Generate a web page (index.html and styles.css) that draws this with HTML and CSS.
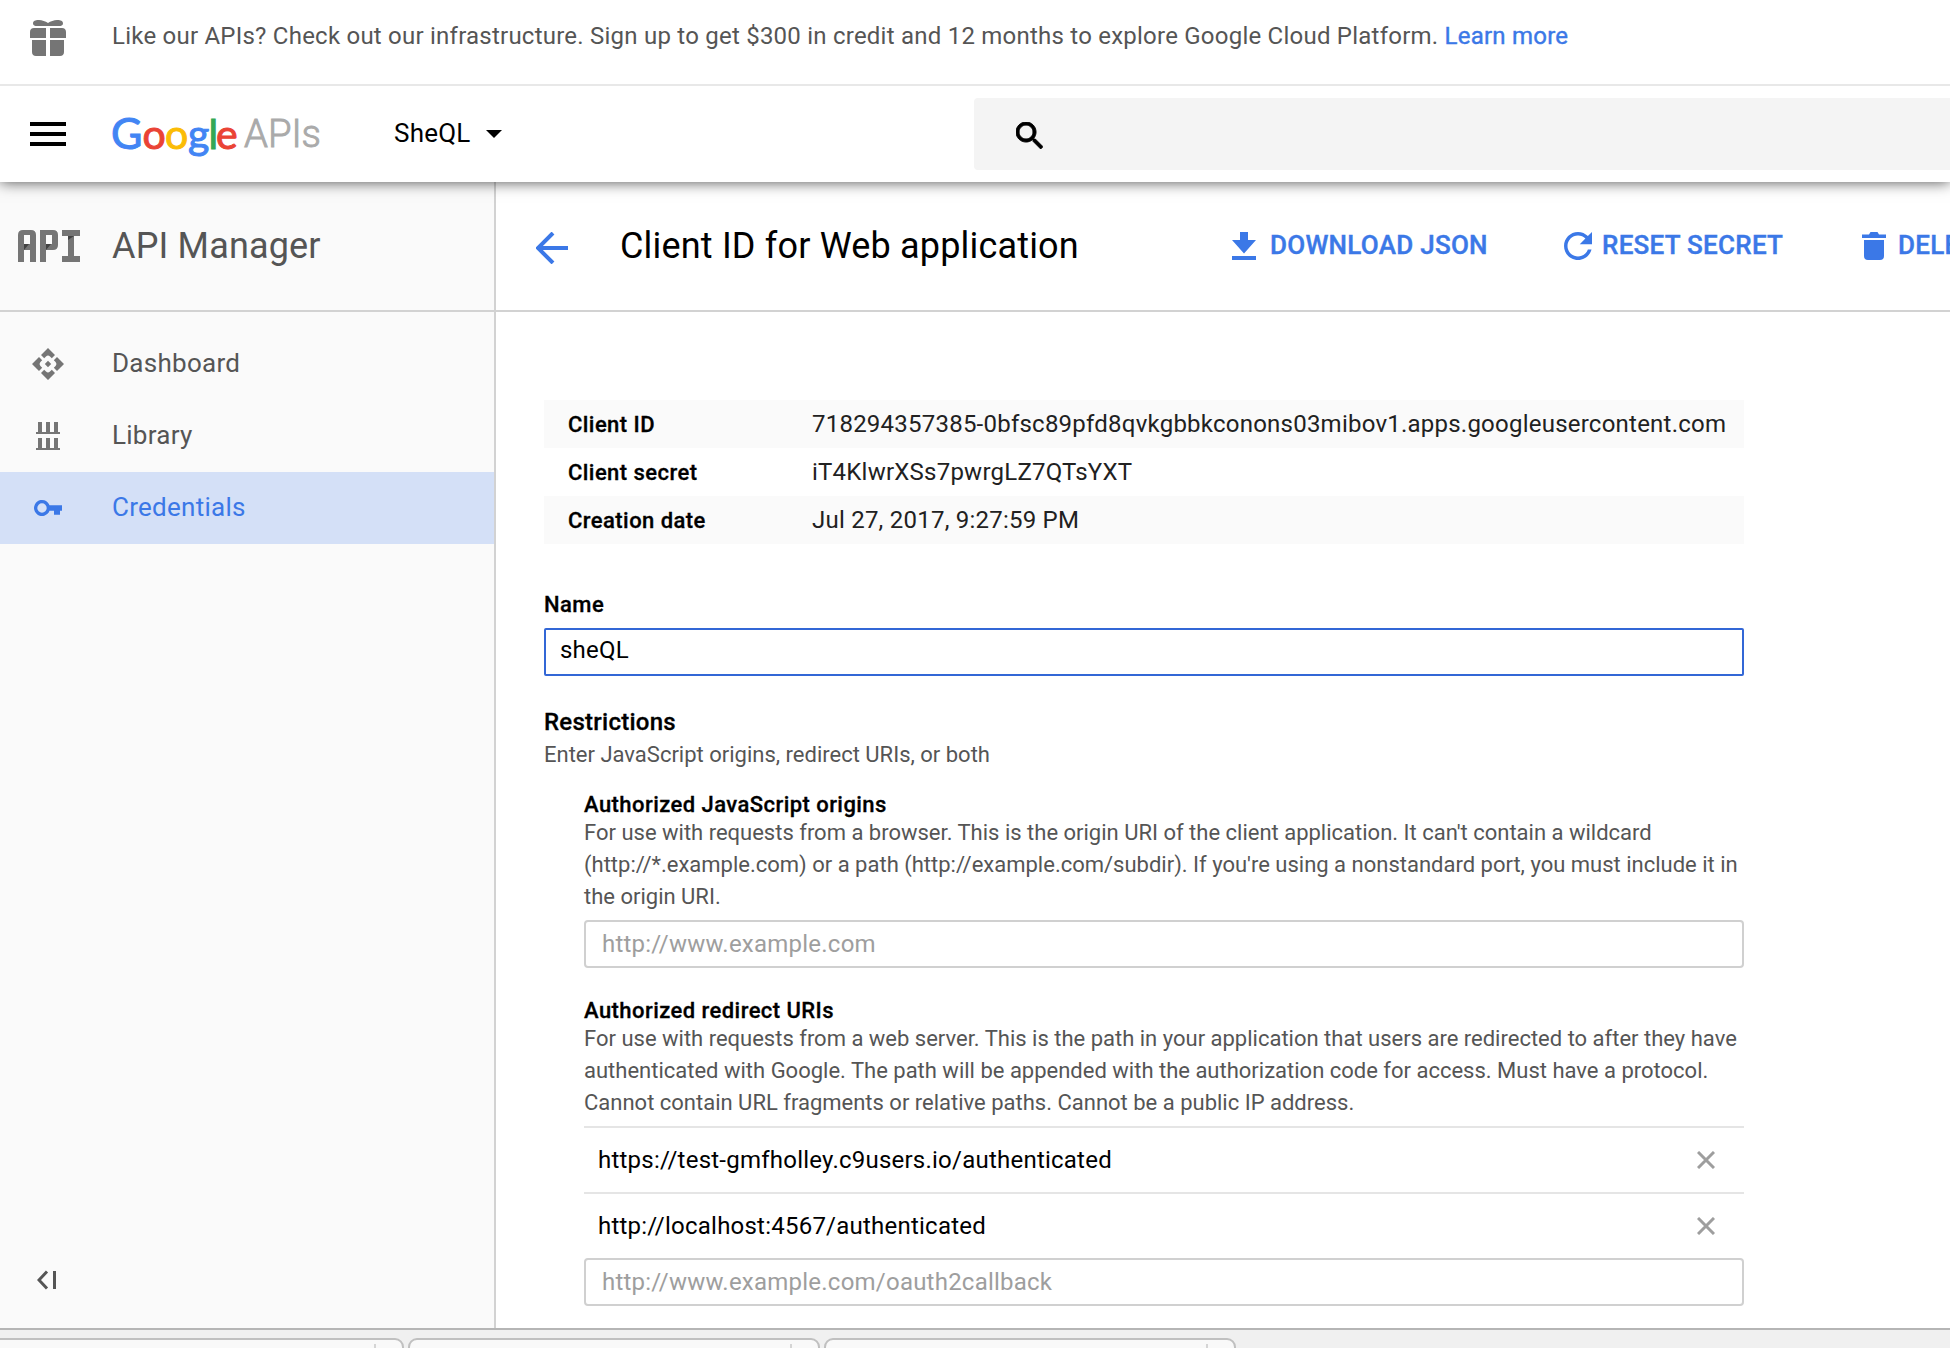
FILE: index.html
```html
<!DOCTYPE html>
<html lang="en">
<head>
<meta charset="utf-8">
<title>Credentials - API Manager</title>
<link rel="stylesheet" href="styles.css">
</head>
<body>
<div class="banner">
  <svg class="gift" viewBox="0 0 36 36" width="36" height="36"><path d="M3 3.500C3 .8 6-.1 9 .1c3 .2 6.500 1.200 9 2.900 2.500-1.700 6-2.700 9-2.900 3-.2 6 .7 6 3.400C33 5.800 31 6 29 6H7C5 6 3 5.800 3 3.500zM4 8h12v10H0v-6c0-2.500 1.500-4 4-4zM20 8h12c2.500 0 4 1.500 4 4v6H20zM2 20h14v16H6c-2.500 0-4-1.500-4-4zM20 20h14v12c0 2.500-1.500 4-4 4H20z"/></svg>
  <p class="banner-text">Like our APIs? Check out our infrastructure. Sign up to get $300 in credit and 12 months to explore Google Cloud Platform. <a class="learn">Learn more</a></p>
</div>
<header class="topbar">
  <div class="burger"><i></i><i></i><i></i></div>
  <svg class="logo" width="212" height="60" viewBox="0 -5 212 60">
    <g class="google"><text x="-1" y="35" class="b cap">G</text><text x="30.500" y="35" class="r">o</text><text x="53" y="35" class="y">o</text><text x="76" y="35" class="b">g</text><text x="96.500" y="35" class="g">l</text><text x="104" y="35" class="r">e</text></g>
    <text x="132" y="33" class="apis" textLength="77" lengthAdjust="spacingAndGlyphs">APIs</text>
  </svg>
  <div class="project"><span>SheQL</span><i class="caret"></i></div>
  <div class="search"><svg width="27" height="27" viewBox="3 3 17.500 17.500"><path d="M15.500 14h-.79l-.28-.27C15.410 12.590 16 11.110 16 9.500 16 5.910 13.090 3 9.500 3S3 5.910 3 9.500 5.910 16 9.500 16c1.610 0 3.090-.59 4.230-1.570l.27.28v.79l5 4.990L20.490 19l-4.990-5zm-6 0C7.010 14 5 11.990 5 9.500S7.010 5 9.500 5 14 7.010 14 9.500 11.990 14 9.500 14z"/></svg></div>
</header>
<div class="body">
  <aside class="side">
    <div class="side-head">
      <svg class="api" width="62" height="32" viewBox="0 0 62 32"><path d="M0 32V5Q0 0 5 0h8q5 0 5 5v27h-6V20H6v12zM6 5v9h6V5zM22 32V0h13q5 0 5 5v10q0 5-5 5h-7v12zM28 5v9h6V5zM44 0h18v6h-6v20h6v6H44v-6h6V6h-6z" fill-rule="evenodd"/><path class="fold" d="M6 14h5l-5 6zM28 14h5l-5 6zM50 6h6l-6 4z"/></svg>
      <span>API Manager</span>
    </div>
    <nav>
      <a class="item"><svg width="32" height="32" viewBox="0 0 32 32"><path d="M16 0l7 7-3.200 3.200L18 8.400a3 3 0 0 0-4 0l-1.800 1.800L9 7zM16 32l7-7-3.200-3.200L18 23.600a3 3 0 0 1-4 0l-1.800-1.800L9 25zM0 16l7-7 3.200 3.200L8.400 14a3 3 0 0 0 0 4l1.800 1.800L7 23zM32 16l-7-7-3.200 3.200 1.800 1.800a3 3 0 0 1 0 4l-1.800 1.800L25 23zM16 12.800l3.200 3.200-3.200 3.200-3.200-3.200z"/></svg><span>Dashboard</span></a>
      <a class="item"><svg width="32" height="32" viewBox="0 0 32 32"><path d="M6 2h4v10h4V2h4v10h4V2h4v10h2v2H4v-2h2zM6 18h4v10h4V18h4v10h4V18h4v10h2v2H4v-2h2z"/></svg><span>Library</span></a>
      <a class="item active"><svg width="32" height="32" viewBox="0 0 32 32"><path d="M17.540 13.300a8 8 0 1 0 0 5.400H22v4h6v-4h2v-5.400zM10 20.700a4.700 4.700 0 1 1 0-9.400 4.700 4.700 0 0 1 0 9.400z"/></svg><span>Credentials</span></a>
    </nav>
    <svg class="collapse" width="20" height="20" viewBox="0 0 20 20"><path d="M10 1.500L2 10l8 8.500M17.500 1v18"/></svg>
  </aside>
  <main>
    <div class="head">
      <svg class="back" width="32" height="32" viewBox="0 0 32 32"><path d="M17 1L2 16l15 15M2 16h30"/></svg>
      <h1>Client ID for Web application</h1>
      <div class="actions">
        <a class="act a1"><svg width="24" height="28" viewBox="0 0 24 28"><path d="M8 0h8v8h8L12 21.500 0 8h8zM0 24h24v4H0z"/></svg><span>DOWNLOAD JSON</span></a>
        <a class="act a2"><svg width="28" height="28" viewBox="4 4 16 16"><path d="M17.650 6.350C16.200 4.900 14.210 4 12 4c-4.420 0-7.990 3.580-7.990 8s3.570 8 7.990 8c3.730 0 6.840-2.550 7.730-6h-2.080c-.82 2.330-3.040 4-5.650 4-3.310 0-6-2.690-6-6s2.690-6 6-6c1.660 0 3.140.69 4.220 1.780L13 11h7V4l-2.350 2.350z"/></svg><span>RESET SECRET</span></a>
        <a class="act a3"><svg width="24" height="28" viewBox="0 0 24 28"><path d="M0 2.500h7L8.500 0h7L17 2.500h7V6H0zM2 8h20v16a4 4 0 0 1-4 4H6a4 4 0 0 1-4-4z"/></svg><span>DELETE</span></a>
      </div>
    </div>
    <div class="content">
      <dl class="info">
        <div class="row"><dt>Client ID</dt><dd>718294357385-0bfsc89pfd8qvkgbbkconons03mibov1.apps.googleusercontent.com</dd></div>
        <div class="row"><dt>Client secret</dt><dd>iT4KlwrXSs7pwrgLZ7QTsYXT</dd></div>
        <div class="row"><dt>Creation date</dt><dd>Jul 27, 2017, 9:27:59 PM</dd></div>
      </dl>
      <h3 class="name">Name</h3>
      <div class="input focus">sheQL</div>
      <h2>Restrictions</h2>
      <p class="desc lead">Enter JavaScript origins, redirect URIs, or both</p>
      <section class="group">
        <h3>Authorized JavaScript origins</h3>
        <p class="desc">For use with requests from a browser. This is the origin URI of the client application. It can't contain a wildcard<br>(http://*.example.com) or a path (http://example.com/subdir). If you're using a nonstandard port, you must include it in<br>the origin URI.</p>
        <div class="input">http://www.example.com</div>
      </section>
      <section class="group second">
        <h3>Authorized redirect URIs</h3>
        <p class="desc">For use with requests from a web server. This is the path in your application that users are redirected to after they have<br>authenticated with Google. The path will be appended with the authorization code for access. Must have a protocol.<br>Cannot contain URL fragments or relative paths. Cannot be a public IP address.</p>
        <div class="uris">
          <div class="uri"><span>https://test-gmfholley.c9users.io/authenticated</span><svg width="18" height="18" viewBox="0 0 18 18"><path d="M1 1l16 16M17 1L1 17"/></svg></div>
          <div class="uri"><span>http://localhost:4567/authenticated</span><svg width="18" height="18" viewBox="0 0 18 18"><path d="M1 1l16 16M17 1L1 17"/></svg></div>
          <div class="input">http://www.example.com/oauth2callback</div>
        </div>
      </section>
    </div>
  </main>
</div>
<footer class="downloads"><div class="tab"></div><div class="tab"></div><div class="tab"></div></footer>
</body>
</html>
```
FILE: styles.css
```css
* { box-sizing: border-box; margin: 0; padding: 0; }
body { width: 1950px; height: 1348px; overflow: hidden; display: flex; flex-direction: column; background: #fff; color: #000; font-family: Roboto, sans-serif; font-size: 24px; letter-spacing: .23px; white-space: nowrap; }
svg { flex: none; display: block; }
.banner { height: 86px; flex: none; display: flex; position: relative; z-index: 2; background: #fff; border-bottom: 2px solid #e8e8e8; padding: 20px 30px; }
.gift { fill: #757575; }
.banner-text { margin-left: 46px; line-height: 32px; color: #555; }
.learn { color: #3b78e7; -webkit-text-stroke: .4px #3b78e7; }
.topbar { height: 96px; flex: none; display: flex; position: relative; z-index: 1; background: #fff; box-shadow: 0 0 14px rgba(0,0,0,.7); }
.burger { margin: 36px 46px 0 30px; width: 36px; display: flex; flex-direction: column; gap: 6px; }
.burger i { height: 4px; background: #000; }
.logo { margin-top: 23px; overflow: visible; }
.google { font: 41px Lato, sans-serif; letter-spacing: 0; stroke-width: 1; }
.cap { font-size: 43px; }
.b { fill: #4285f4; stroke: #4285f4; }
.r { fill: #ea4335; stroke: #ea4335; }
.y { fill: #fbbc05; stroke: #fbbc05; }
.g { fill: #34a853; stroke: #34a853; }
.apis { font: 300 39px Roboto, sans-serif; letter-spacing: 0; fill: #aaa; stroke: #aaa; stroke-width: .9; }
.project { margin: 31px 0 0 70px; width: 108px; height: 32px; line-height: 32px; display: flex; justify-content: space-between; font-size: 26px; }
.caret { margin-top: 13px; width: 16px; height: 8px; background: #000; clip-path: polygon(0 0, 100% 0, 50% 100%); }
.search { margin: 12px 0 0 auto; width: 976px; height: 72px; border-radius: 4px 0 0 4px; background: #f4f4f4; padding: 24px 42px; }
.search path { stroke: #000; stroke-width: .6; }
.body { height: 1146px; flex: none; display: flex; }
.side { width: 496px; flex: none; background: #fafafa; border-right: 2px solid #d2d2d2; display: flex; flex-direction: column; color: #555; }
.side-head { height: 130px; border-bottom: 2px solid #d2d2d2; padding: 48px 0 0 18px; display: flex; gap: 32px; line-height: 32px; font-size: 36px; letter-spacing: .16px; }
.api { fill: #757575; }
.fold { fill: #424242; }
nav { padding-top: 16px; font-size: 26px; letter-spacing: .27px; }
.item { display: flex; height: 72px; padding-left: 32px; align-items: center; gap: 48px; line-height: 70px; fill: #757575; }
.item span { height: 72px; }
.active { background: #d4e0f7; color: #3b78e7; fill: #3b78e7; }
.collapse { margin: auto 0 38px 37px; fill: none; stroke: #555; stroke-width: 3; }
main { flex: 1; min-width: 0; display: flex; flex-direction: column; }
.head { height: 130px; flex: none; border-bottom: 2px solid #d2d2d2; display: flex; padding: 43px 0 0 40px; overflow: hidden; line-height: 42px; }
.back { margin: 7px 52px 0 0; fill: none; stroke: #3b78e7; stroke-width: 4; }
h1 { font-size: 36px; font-weight: 400; width: 612px; flex: none; letter-spacing: .18px; }
.actions { display: flex; flex: none; color: #3b78e7; fill: #3b78e7; font-weight: 500; font-size: 26px; letter-spacing: .27px; line-height: 40px; -webkit-text-stroke: .4px #3b78e7; }
.act { display: flex; flex: none; }
.act svg { margin-top: 7px; }
.a1 { gap: 14px; width: 332px; }
.a2 { gap: 10px; width: 298px; }
.a3 { gap: 12px; }
.content { padding: 88px 0 0 48px; width: 1248px; }
.row { display: flex; height: 48px; padding-left: 24px; line-height: 48px; }
.row:nth-child(odd) { background: #fafafa; }
dt, h3 { font-weight: 500; font-size: 22px; letter-spacing: .44px; -webkit-text-stroke: .3px #000; }
dt { width: 244px; line-height: 50px; }
dd { color: #212121; }
h3 { line-height: 26px; margin-bottom: -1px; }
.name { margin-top: 48px; }
.input { height: 48px; border: 2px solid #d0d0d0; border-radius: 4px; padding-left: 16px; line-height: 44px; color: #9e9e9e; }
.focus { margin-top: 11px; border-color: #3367d6; border-radius: 2px; padding-left: 14px; color: #000; line-height: 40px; }
h2 { margin-top: 30px; font-size: 24px; font-weight: 500; line-height: 32px; letter-spacing: .25px; -webkit-text-stroke: .3px #000; }
.desc { font-size: 22px; line-height: 32px; letter-spacing: 0; color: #555; }
.lead { margin-top: 1px; }
.group { margin: 21px 0 0 40px; }
.group > .input { margin-top: 7px; }
.second { margin-top: 30px; }
.uris { margin-top: 7px; }
.uri { height: 66px; border-top: 2px solid #e5e5e5; padding: 0 29px 0 14px; display: flex; justify-content: space-between; align-items: center; }
.uri svg { stroke: #9e9e9e; stroke-width: 3; }
.downloads { height: 20px; flex: none; border-top: 2px solid #b5b5b5; background: #f0f0f0; padding: 8px 0 0; display: flex; gap: 4px; }
.tab { width: 412px; height: 30px; flex: none; border: 2px solid #c0c0c0; border-radius: 9px; background: linear-gradient(90deg, transparent 380px, #d5d5d5 380px, #d5d5d5 382px, transparent 382px) 0 4px no-repeat, #f9f9f9; }
.tab:first-child { margin-left: -8px; }
```
